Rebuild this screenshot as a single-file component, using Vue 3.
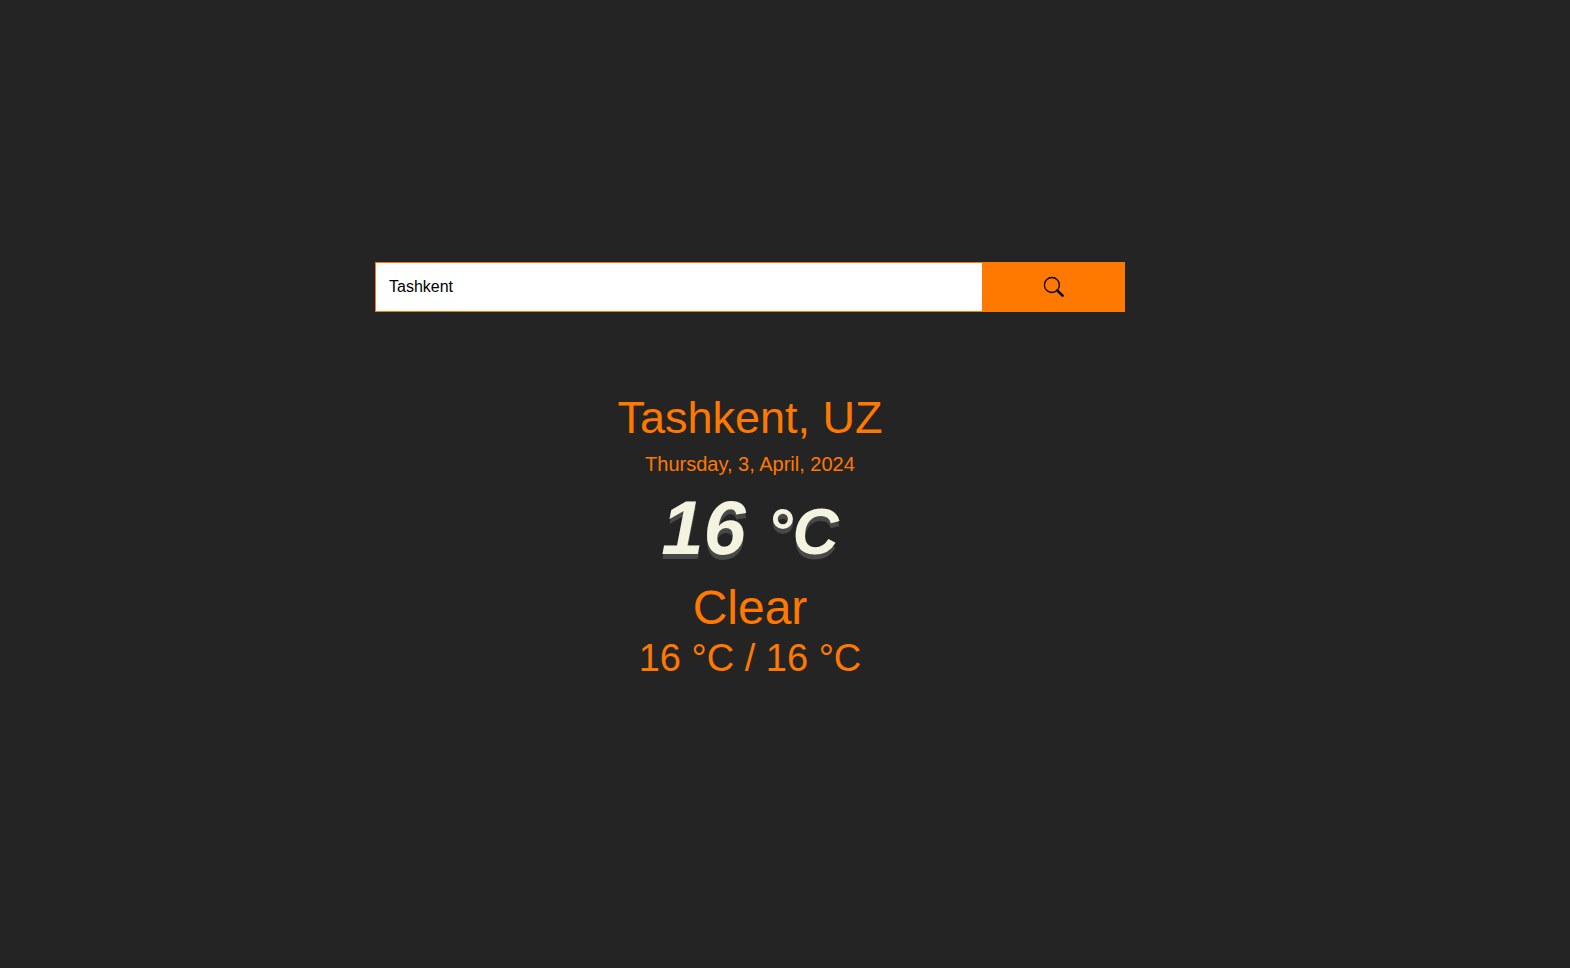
<script setup>
import { ref } from 'vue'

const query = ref('Tashkent')
const weather = {
  place: 'Tashkent, UZ',
  date: 'Thursday, 3, April, 2024',
  temp: 16,
  status: 'Clear',
  high: 16,
  low: 16,
}
</script>

<template>
  <main class="page">
    <form class="search" role="search" @submit.prevent>
      <input v-model="query" class="field" type="text" aria-label="City" />
      <button class="submit" type="submit" aria-label="Search">
        <svg class="icon" viewBox="0 0 20 20" aria-hidden="true">
          <circle cx="7.9" cy="8" r="7.5" fill="none" stroke="#000" stroke-width="1.3" />
          <path d="M13.2 13.3L18.6 18.7" fill="none" stroke="#000" stroke-width="2.6" stroke-linecap="round" />
        </svg>
      </button>
    </form>
    <section class="weather">
      <h1 class="place">{{ weather.place }}</h1>
      <p class="date">{{ weather.date }}</p>
      <p class="temp">{{ weather.temp }} <span class="unit">°C</span></p>
      <p class="status">{{ weather.status }}</p>
      <p class="range">{{ weather.high }} °C / {{ weather.low }} °C</p>
    </section>
  </main>
</template>

<style>
body {
  margin: 0;
  background: #242424;
}
</style>

<style scoped>
.page {
  box-sizing: border-box;
  min-height: 100vh;
  padding: 0 70px 26px 0;
  display: flex;
  flex-direction: column;
  align-items: center;
  justify-content: center;
  gap: 80px;
  font-family: Arial, "Liberation Sans", sans-serif;
  color: #ff7800;
}
.search {
  display: flex;
  width: 50%;
  height: 50px;
}
.field {
  box-sizing: border-box;
  flex: 1;
  min-width: 0;
  padding: 0 13px;
  border: 1px solid #ff7800;
  border-right: 0;
  border-radius: 0;
  background: #fff;
  color: #000;
  font-family: inherit;
  font-size: 16px;
  outline: none;
}
.submit {
  flex: 0 0 143px;
  display: flex;
  align-items: center;
  justify-content: center;
  padding: 0;
  border: 0;
  background: #ff7800;
  cursor: pointer;
}
.icon {
  width: 20px;
  height: 20px;
  overflow: visible;
}
.weather {
  text-align: center;
}
.place,
.date,
.temp,
.status,
.range {
  margin: 0;
  font-weight: 400;
}
.place {
  font-size: 45px;
  line-height: 52px;
}
.date {
  margin-top: 8px;
  font-size: 20px;
  line-height: 24px;
}
.temp {
  margin-top: 8px;
  font-size: 76px;
  line-height: 88px;
  font-style: italic;
  font-weight: 700;
  color: #f3f3e0;
  text-shadow: 0 5px #484848;
}
.unit {
  font-size: 64px;
}
.status {
  margin-top: 4px;
  font-size: 48px;
  line-height: 56px;
}
.range {
  font-size: 38px;
  line-height: 44px;
}
</style>
